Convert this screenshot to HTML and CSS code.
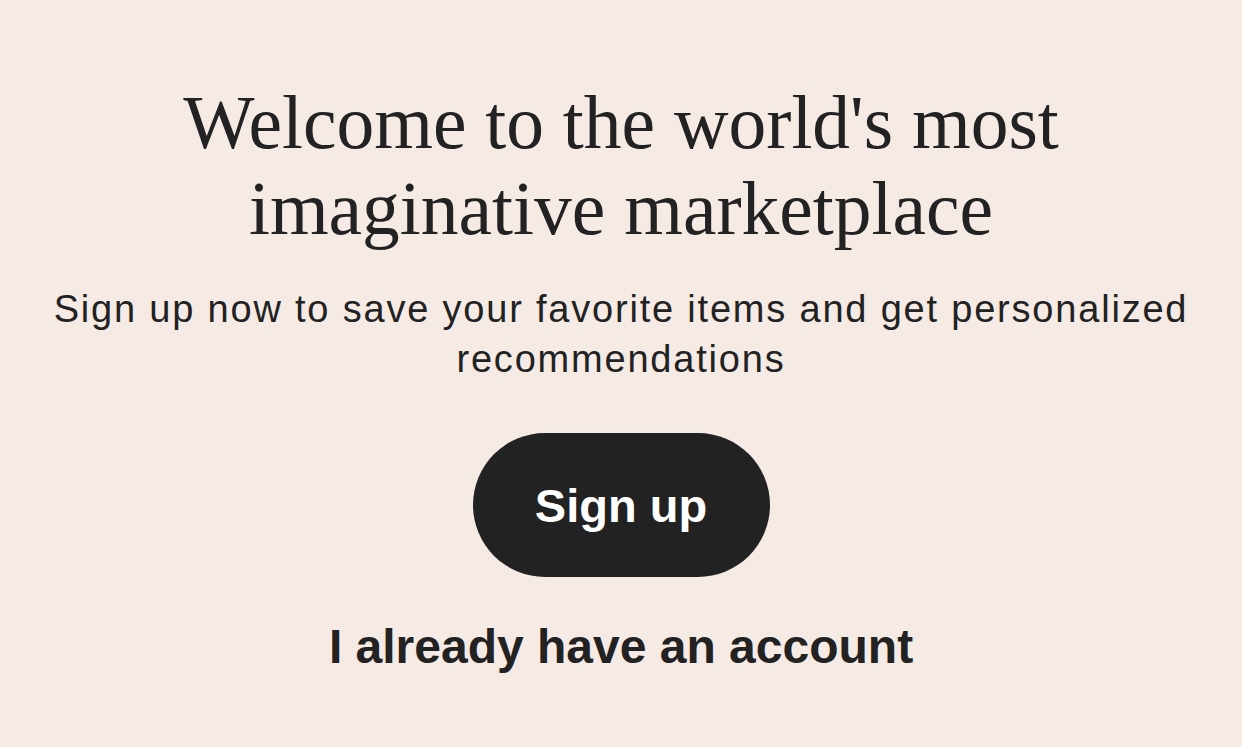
FILE: index.html
```html
<!DOCTYPE html>
<html lang="en">
<head>
<meta charset="utf-8">
<title>Welcome</title>
<link rel="stylesheet" href="styles.css">
</head>
<body>
<main class="welcome">
  <h1 class="welcome-title">Welcome to the world's most imaginative marketplace</h1>
  <p class="welcome-sub">Sign up now to save your favorite items and get personalized recommendations</p>
  <button class="btn-signup" type="button">Sign up</button>
  <a class="link-account" href="#">I already have an account</a>
</main>
</body>
</html>
```
FILE: styles.css
```css
html, body {
  margin: 0;
  padding: 0;
  background: #f6eae5;
  height: 100%;
}
.welcome {
  display: flex;
  flex-direction: column;
  align-items: center;
  text-align: center;
  padding: 80px 20px 0;
  color: #222222;
}
.welcome-title {
  margin: 0;
  width: 900px;
  font-family: "Liberation Serif", serif;
  font-weight: 400;
  font-size: 75.5px;
  line-height: 86px;
}
.welcome-sub {
  margin: 32px 0 0;
  width: 1200px;
  font-family: "Liberation Sans", Arial, sans-serif;
  font-size: 38px;
  line-height: 50px;
  letter-spacing: 1.8px;
}
.btn-signup {
  margin-top: 49px;
  width: 297px;
  height: 144px;
  border: none;
  border-radius: 72px;
  background: #222222;
  color: #ffffff;
  font-family: "Liberation Sans", Arial, sans-serif;
  font-weight: 700;
  font-size: 47px;
  cursor: pointer;
}
.link-account {
  margin-top: 42px;
  font-family: "Liberation Sans", Arial, sans-serif;
  font-weight: 700;
  font-size: 48px;
  line-height: 56px;
  color: #222222;
  text-decoration: none;
}
```
